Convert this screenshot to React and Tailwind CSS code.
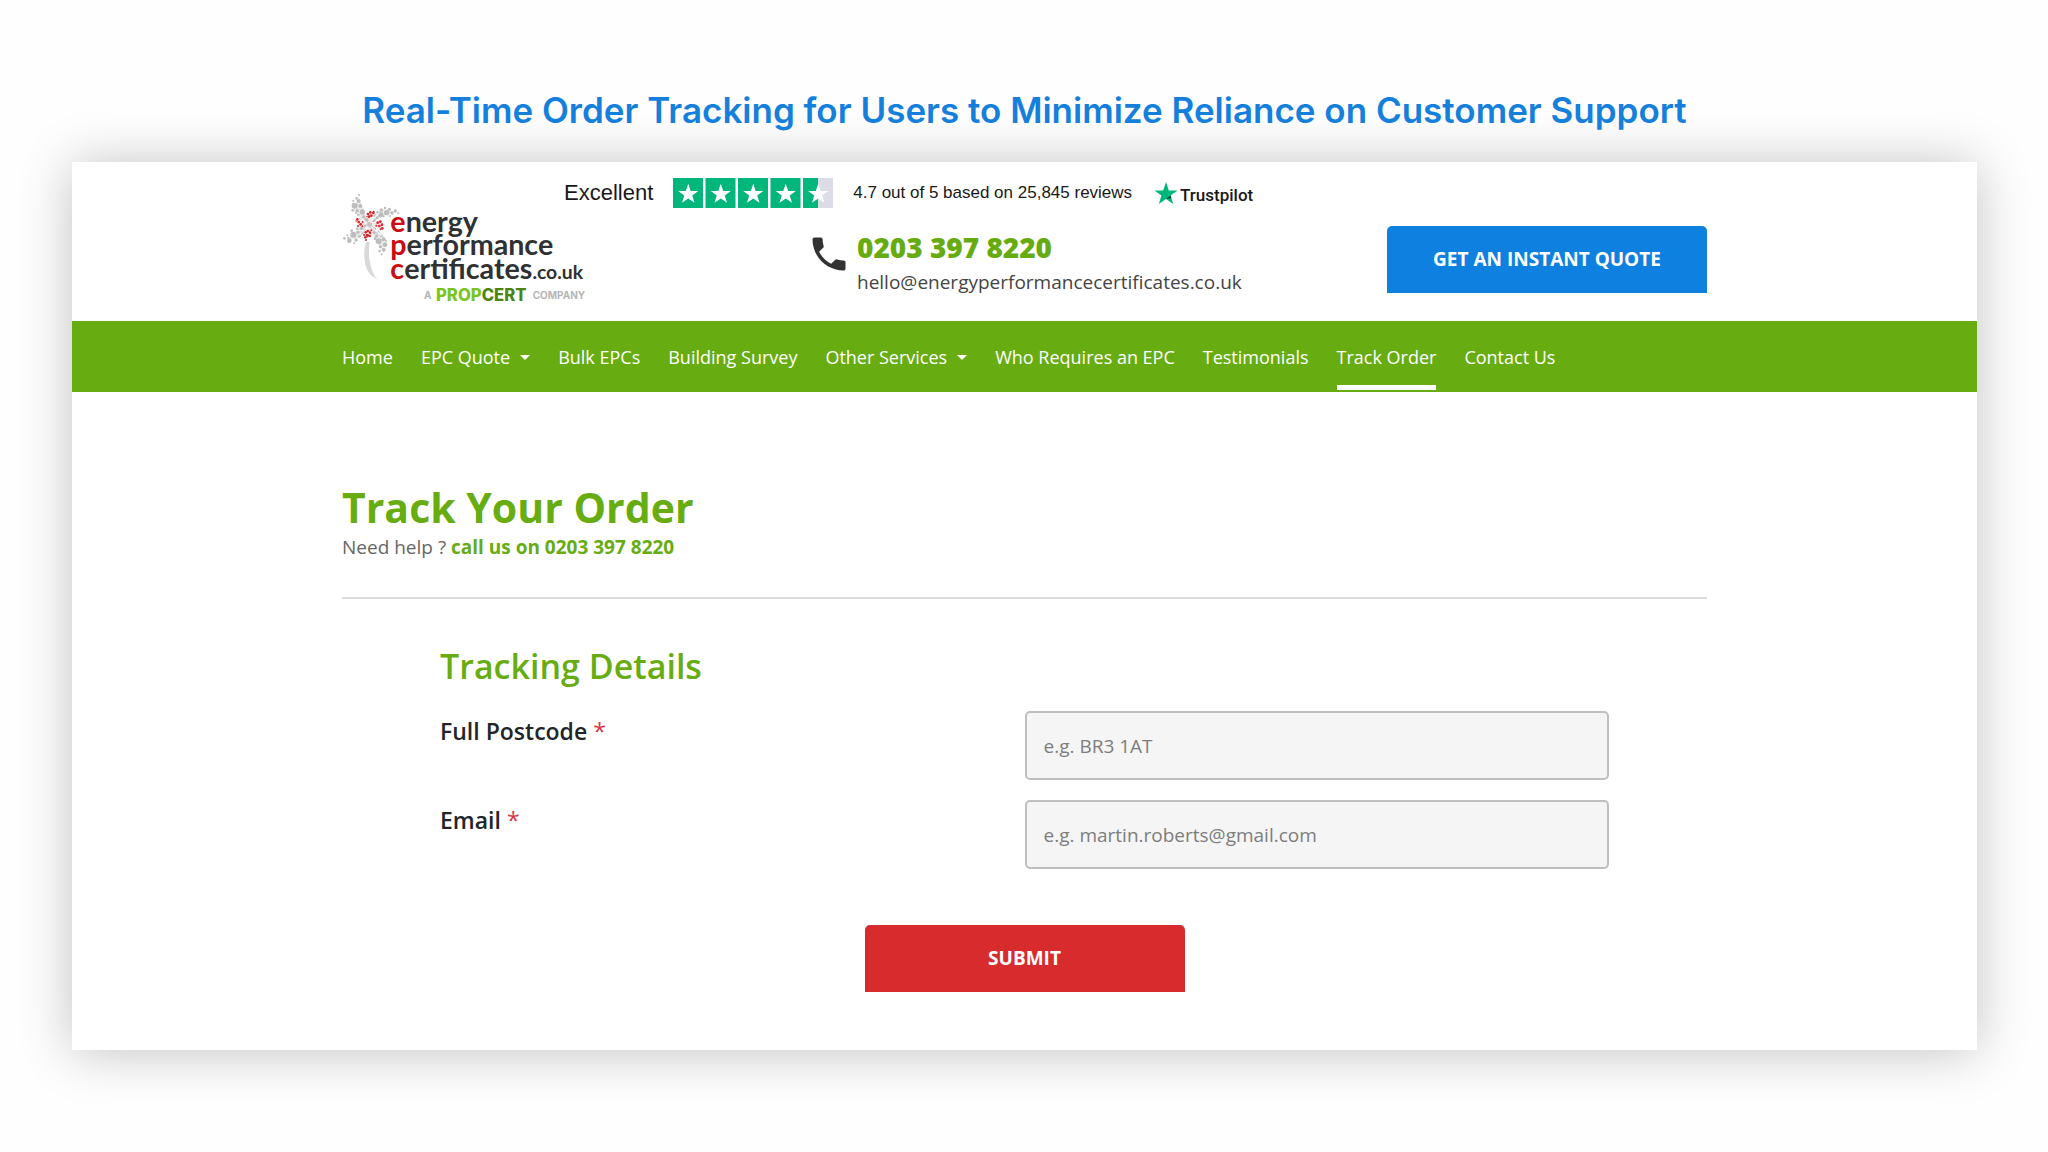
import React from 'react';
import { MdPhone } from 'react-icons/md';

const NAV_ITEMS = [
  { label: 'Home' },
  { label: 'EPC Quote', hasMenu: true },
  { label: 'Bulk EPCs' },
  { label: 'Building Survey' },
  { label: 'Other Services', hasMenu: true },
  { label: 'Who Requires an EPC' },
  { label: 'Testimonials' },
  { label: 'Track Order', active: true },
  { label: 'Contact Us' }
];

const FIELDS = [
  { id: 'postcode', label: 'Full Postcode', type: 'text', placeholder: 'e.g. BR3 1AT' },
  { id: 'email', label: 'Email', type: 'email', placeholder: 'e.g. martin.roberts@gmail.com' }
];

// Pinwheel dots: [x, y, radius]
const GREY_DOTS = [
  [87, 45, 3], [80, 55, 4], [86, 63, 6], [70, 62, 3], [74, 77, 9], [91, 78, 6], [68, 91, 4],
  [82, 92, 5], [97, 96, 8], [85, 105, 4], [101, 111, 5], [92, 115, 4], [109, 120, 6], [78, 99, 3],
  [205, 100, 3], [196, 93, 5], [186, 99, 5], [178, 88, 5], [165, 84, 4], [170, 98, 8], [154, 90, 5],
  [152, 104, 8], [143, 97, 4], [141, 113, 5], [134, 107, 4], [131, 121, 6], [161, 109, 3], [180, 108, 3],
  [43, 175, 4], [52, 166, 3], [58, 182, 7], [54, 173, 3], [70, 164, 9], [65, 152, 4], [78, 180, 5],
  [84, 157, 5], [88, 168, 5], [96, 158, 5], [94, 145, 5], [102, 148, 5], [82, 146, 4], [106, 139, 5],
  [72, 189, 3], [155, 223, 3], [149, 213, 4], [161, 209, 6], [165, 194, 7], [151, 200, 5], [146, 184, 9],
  [161, 178, 6], [154, 167, 5], [140, 168, 5], [144, 157, 5], [132, 158, 5], [134, 147, 5], [168, 183, 3],
  [126, 142, 5], [135, 176, 4], [118, 133, 8]
];

const RED_DOTS = [
  [82, 118, 4], [86, 126, 4], [92, 133, 4], [84, 138, 3], [98, 126, 3], [97, 139, 3], [78, 123, 2],
  [114, 102, 4], [121, 97, 4], [130, 99, 4], [117, 110, 4], [124, 107, 4], [131, 95, 3], [111, 110, 2],
  [143, 128, 4], [151, 125, 4], [156, 134, 4], [148, 138, 4], [139, 137, 3], [157, 145, 4], [152, 148, 3],
  [107, 157, 4], [113, 153, 4], [120, 158, 4], [112, 166, 5], [106, 172, 4], [119, 168, 4], [108, 180, 3],
  [124, 151, 3], [102, 165, 3]
];

const STAR = 'M15 4.5l2.6 7.6h8l-6.4 4.8 2.4 7.7L15 20l-6.6 4.6 2.4-7.7-6.4-4.8h8z';

function Logo() {
  return (
    <svg
      viewBox="36 42 738 345"
      className="h-[115px] w-[246px] max-w-none"
      role="img"
      aria-label="Energy Performance Certificates"
    >
      <path d="M108 186C98 220 98 282 142 297C124 278 112 236 119 186Z" fill="#d9d9d9" />
      {/* blades */}
      <path
        d="M118 133L68 92L86 52L101 88ZM118 133L150 88L196 94L154 110ZM118 133L162 170L160 214L134 176ZM118 133L88 174L50 180L82 148Z"
        fill="#ececec"
      />
      {/* inner folds */}
      <path
        d="M118 133L104 104L134 92ZM118 133L152 122L160 148ZM118 133L126 166L104 180ZM118 133L84 142L76 116Z"
        fill="#fbe3e3"
      />
      {GREY_DOTS.map(([x, y, r]) => (
        <circle key={`${x}-${y}`} cx={x} cy={y} r={r} fill="#bdbdbd" />
      ))}
      {RED_DOTS.map(([x, y, r]) => (
        <circle key={`${x}-${y}`} cx={x} cy={y} r={r} fill="#d8232a" />
      ))}
      <path
        d="M84 107L156 167M148 98L86 166"
        fill="none"
        stroke="#f4f4f4"
        strokeWidth="4"
      />
      <circle cx="118" cy="134" r="7" fill="#c4c4c4" />

      <g className="font-['Lato',sans-serif] font-bold" fill="#2f3133" fontSize="86">
        <text x="181" y="157"><tspan fill="#cc0a11">e</tspan>nergy</text>
        <text x="181" y="226"><tspan fill="#cc0a11">p</tspan>erformance</text>
        <text x="181" y="296">
          <tspan fill="#cc0a11">c</tspan>ertificates<tspan fontSize="58">.co.uk</tspan>
        </text>
      </g>
      <g className="font-['Inter',sans-serif]">
        <text x="282" y="357" fontSize="30" fill="#b5b5b5" className="font-bold">A</text>
        <text x="318" y="363" fontSize="50" fill="#7ac51c" className="font-extrabold">
          PROP<tspan fill="#4c8511">CERT</tspan>
        </text>
        <text x="608" y="357" fontSize="30" fill="#b5b5b5" className="font-bold">COMPANY</text>
      </g>
    </svg>
  );
}

function StarRating() {
  return (
    <svg viewBox="0 0 160 30" className="h-[30px] w-[160px]" role="img" aria-label="4.7 out of 5 stars">
      {[0, 1, 2, 3, 4].map(i => (
        <g key={i} transform={`translate(${i * 32.5} 0)`}>
          <rect width="30" height="30" fill={i === 4 ? '#dcdce6' : '#00b67a'} />
          {i === 4 && <rect width="15" height="30" fill="#00b67a" />}
          <path d={STAR} fill="#fff" transform="translate(1 1.5) scale(0.95)" />
        </g>
      ))}
    </svg>
  );
}

function TrustpilotLogo() {
  return (
    <div className="flex items-center gap-[2px]">
      <svg viewBox="4 4 22 21" className="h-6 w-6" aria-hidden="true">
        <path d={STAR} fill="#00b67a" />
        <path d="M19.2 16.9l.7 2.3L15 20z" fill="#005128" />
      </svg>
      <span className="pt-1 font-['Roboto',sans-serif] text-[17px] leading-5 font-medium text-[#191919]">
        Trustpilot
      </span>
    </div>
  );
}

function Header() {
  return (
    <header className="mx-auto flex h-[159px] max-w-[1365px]">
      <a href="#home" className="w-[222px] shrink-0 pt-8">
        <Logo />
      </a>

      <div className="flex-1">
        <div className="flex items-center pt-4 font-['Liberation_Sans',sans-serif] text-[#191919]">
          <span className="text-[22px] leading-[30px]">Excellent</span>
          <div className="ml-5">
            <StarRating />
          </div>
          <span className="mr-[22px] ml-5 text-[17px] leading-[30px]">
            4.7 out of 5 based on 25,845 reviews
          </span>
          <TrustpilotLogo />
        </div>

        <div className="flex items-start justify-between pt-[18px] pl-[243px]">
          <div className="flex items-start">
            <MdPhone className="mt-[6px] size-[44px] text-[#333]" aria-hidden="true" />
            <div className="ml-[6px] flex flex-col">
              <a href="tel:02033978220" className="text-[28px] leading-[42px] font-extrabold text-[#66ac10]">
                0203 397 8220
              </a>
              <a
                href="mailto:hello@energyperformancecertificates.co.uk"
                className="text-[19px] leading-7 text-[#444]"
              >
                hello@energyperformancecertificates.co.uk
              </a>
            </div>
          </div>
          <button
            type="button"
            className="h-[67px] w-[320px] rounded-t-[5px] bg-[#0e81e0] text-[19px] font-bold text-white"
          >
            GET AN INSTANT QUOTE
          </button>
        </div>
      </div>
    </header>
  );
}

function NavBar() {
  return (
    <nav className="bg-[#67ac10]">
      <ul className="mx-auto flex h-[71px] max-w-[1365px] gap-7">
        {NAV_ITEMS.map(item => (
          <li key={item.label} className="flex pb-[2px]">
            <a
              href="#nav"
              aria-current={item.active ? 'page' : undefined}
              className={`flex items-center border-b-[5px] pt-2 text-[18px] whitespace-nowrap text-white ${
                item.active ? 'border-b-white' : 'border-b-transparent'
              }`}
            >
              {item.label}
              {item.hasMenu && (
                <span className="ml-[10px] border-x-[5px] border-t-[5px] border-x-transparent border-t-white" />
              )}
            </a>
          </li>
        ))}
      </ul>
    </nav>
  );
}

function TrackingForm() {
  return (
    <form className="px-[98px] pt-[42px]" onSubmit={e => e.preventDefault()}>
      <h2 className="text-[34px] leading-[50px] font-semibold text-[#67ac10]">Tracking Details</h2>

      <div className="mt-5 space-y-5">
        {FIELDS.map(field => (
          <div key={field.id} className="grid grid-cols-2 items-start">
            <label htmlFor={field.id} className="pt-1 text-[23px] leading-8 font-semibold text-[#212529]">
              {field.label} <span className="font-normal text-[#dc3545]">*</span>
            </label>
            <input
              id={field.id}
              type={field.type}
              placeholder={field.placeholder}
              className="h-[69px] w-full rounded-[5px] border-2 border-[#bfbfbf] bg-[#f5f5f5] px-[17px] text-[19px] placeholder:text-[#7d7d7d]"
            />
          </div>
        ))}
      </div>

      <div className="mt-14 flex justify-center">
        <button
          type="submit"
          className="h-[67px] w-[320px] rounded-t-[5px] bg-[#d72b2d] text-[19px] font-bold text-white"
        >
          SUBMIT
        </button>
      </div>
    </form>
  );
}

export default function App() {
  return (
    <div className="min-h-screen bg-[#fefefe] pt-[86px] pr-[71px] pb-[102px] pl-[72px] font-['Open_Sans',sans-serif]">
      <h1 className="text-center font-['Inter',sans-serif] text-[35px] leading-[48px] font-semibold text-[#1580dc]">
        Real-Time Order Tracking for Users to Minimize Reliance on Customer Support
      </h1>

      <div className="mt-7 bg-white pb-[58px] shadow-[0_2px_50px_rgba(0,0,0,0.24)]">
        <Header />
        <NavBar />

        <main className="mx-auto max-w-[1365px] pt-[90px]">
          <div className="border-b-2 border-[#dcdcdc] pb-9">
            <h2 className="text-[41px] leading-[50px] font-bold text-[#67ac10]">Track Your Order</h2>
            <p className="pt-px text-[19px] leading-7 text-[#666]">
              Need help ?{' '}
              <a href="tel:02033978220" className="font-bold text-[#67ac10]">
                call us on 0203 397 8220
              </a>
            </p>
          </div>
          <TrackingForm />
        </main>
      </div>
    </div>
  );
}
